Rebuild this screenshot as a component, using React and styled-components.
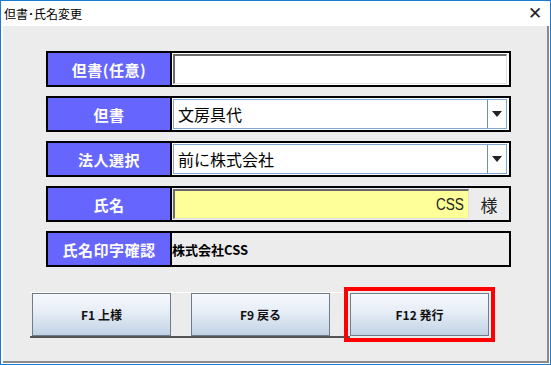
import React from "react";
import styled, { createGlobalStyle } from "styled-components";

const Global = createGlobalStyle`
  html, body { margin: 0; padding: 0; background: #fff; }
  * { box-sizing: border-box; }
`;

const Win = styled.div`
  width: 551px;
  height: 365px;
  border: 1px solid #1a7ad8;
  background: #fff;
  display: flex;
  flex-direction: column;
  font-family: "Noto Sans CJK JP", "Liberation Sans", sans-serif;
`;

const TitleBar = styled.div`
  height: 25px;
  display: flex;
  align-items: center;
  justify-content: space-between;
  padding: 0 8px 0 3px;
  font-size: 12px;
  color: #000;
`;

const Close = styled.span`
  font-size: 17px;
  font-weight: 300;
  line-height: 1;
  color: #222;
  font-family: "DejaVu Sans", sans-serif;
`;

const Body = styled.div`
  flex: 1;
  margin: 0 1px 1px 2px;
  background: #ececec;
  border-right: 2px solid #8a8a8a;
  border-bottom: 2px solid #8a8a8a;
  padding: 25px 0 0 29px;
`;

const Rows = styled.div`
  margin-left: 14px;
  width: 465px;
  display: flex;
  flex-direction: column;
  gap: 9px;
`;

const Row = styled.div`
  height: 36px;
  border: 2px solid #000;
  display: flex;
  background: ${(p) => p.$bg || "#fff"};
`;

const Label = styled.div`
  width: 124px;
  background: #6666ff;
  border-right: 2px solid #000;
  color: #fff;
  font-weight: bold;
  font-size: 15px;
  display: flex;
  align-items: center;
  justify-content: center;
  letter-spacing: 0.5px;
`;

const TextBox = styled.div`
  flex: 1;
  margin: 1px 2px 1px 1px;
  background: ${(p) => p.$bg || "#fff"};
  border-top: 2px solid #6a6a6a;
  border-left: 2px solid #6a6a6a;
  border-right: 1px solid #e0e0e0;
  border-bottom: 1px solid #e0e0e0;
  display: flex;
  align-items: center;
  justify-content: ${(p) => (p.$right ? "flex-end" : "flex-start")};
  padding: 0 4px;
  font-size: 16px;
  color: #000;
`;

const Narrow = styled.span`
  font-family: "Liberation Sans Narrow", "Liberation Sans", sans-serif;
  color: #222;
  display: inline-block;
  transform: scaleX(0.85);
  transform-origin: right center;
`;

const Select = styled.div`
  flex: 1;
  margin: 1px 2px 1px 1px;
  border: 1px solid #7ea7d3;
  background: #fff;
  display: flex;
`;

const SelectText = styled.div`
  flex: 1;
  display: flex;
  align-items: center;
  padding: 0 4px;
  font-size: 16px;
  color: #000;
`;

const Arrow = styled.div`
  width: 19px;
  border-left: 1px solid #6d8fb5;
  display: flex;
  align-items: center;
  justify-content: center;
  &::after {
    content: "";
    border-left: 5px solid transparent;
    border-right: 5px solid transparent;
    border-top: 6px solid #222;
  }
`;

const Sama = styled.div`
  width: 36px;
  display: flex;
  align-items: center;
  justify-content: center;
  font-size: 17px;
  color: #222;
  background: #ececec;
  margin: 1px 2px 1px 0;
`;

const Confirm = styled.div`
  flex: 1;
  background: #ececec;
  display: flex;
  align-items: center;
  font-weight: bold;
  font-size: 13px;
  color: #000;
`;

const Buttons = styled.div`
  margin-top: 26px;
  display: flex;
  align-items: flex-start;
`;

const Strip = styled.div`
  display: flex;
  gap: 20px;
  margin: -1px 0 0 -2px;
  padding: 0 20px 0 2px;
  border-top: 1px solid #fff;
  border-bottom: 2px solid #555;
`;

const Btn = styled.button`
  width: 139px;
  height: 43px;
  border: 1px solid #6f7c8c;
  background: linear-gradient(#f6f9fd 0%, #e8eef6 40%, #c3d3e7 100%);
  font-family: "Noto Sans CJK JP", "Liberation Sans", sans-serif;
  font-weight: bold;
  font-size: 12px;
  color: #111;
  padding: 0;
  outline: ${(p) => (p.$hot ? "4px solid #f00" : "none")};
  outline-offset: 2px;
`;

export default function App() {
  return (
    <>
      <Global />
      <Win>
        <TitleBar>
          <span>但書･氏名変更</span>
          <Close>✕</Close>
        </TitleBar>
        <Body>
          <Rows>
            <Row>
              <Label>但書(任意)</Label>
              <TextBox />
            </Row>
            <Row>
              <Label>但書</Label>
              <Select>
                <SelectText>文房具代</SelectText>
                <Arrow />
              </Select>
            </Row>
            <Row>
              <Label>法人選択</Label>
              <Select>
                <SelectText>前に株式会社</SelectText>
                <Arrow />
              </Select>
            </Row>
            <Row $bg="#ececec">
              <Label>氏名</Label>
              <TextBox $bg="#ffff99" $right>
                <Narrow>CSS</Narrow>
              </TextBox>
              <Sama>様</Sama>
            </Row>
            <Row $bg="#ececec">
              <Label>氏名印字確認</Label>
              <Confirm>株式会社CSS</Confirm>
            </Row>
          </Rows>
          <Buttons>
            <Strip>
              <Btn>F1 上様</Btn>
              <Btn>F9 戻る</Btn>
            </Strip>
            <Btn $hot>F12 発行</Btn>
          </Buttons>
        </Body>
      </Win>
    </>
  );
}
